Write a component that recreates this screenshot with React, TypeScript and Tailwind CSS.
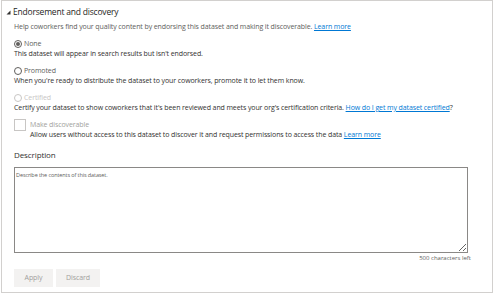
import { useState } from "react";

const font = { fontFamily: '"Segoe UI", "Open Sans", "Liberation Sans", sans-serif' };

function Radio({ checked, disabled }: { checked?: boolean; disabled?: boolean }) {
  return (
    <span
      className={`flex h-[8px] w-[8px] shrink-0 items-center justify-center rounded-full border ${
        disabled ? "border-[#c8c6c4]" : "border-[#605e5c]"
      }`}
    >
      {checked && <span className="h-[4px] w-[4px] rounded-full bg-[#605e5c]" />}
    </span>
  );
}

export default function App() {
  const [text, setText] = useState("");

  return (
    <div className="h-[294px] w-[494px] bg-white pl-[1px]" style={font}>
      <div className="flex h-[293px] w-[492px] flex-col border border-[#d2d0ce] text-[7px] tracking-[-0.1px] text-[#323130]">
        <div className="mt-[4px] flex h-[14px] items-center pl-[4px]">
          <svg width="5" height="5" viewBox="0 0 5 5" className="mr-[2px] mt-[1px]">
            <path d="M4.5 0.5 L4.5 4.5 L0.5 4.5 Z" fill="#323130" />
          </svg>
          <span className="text-[8.5px] leading-[14px] tracking-[-0.2px] text-[#252423]">
            Endorsement and discovery
          </span>
        </div>

        <div className="pl-[12px]">
          <p className="mt-[3px] leading-[10px] text-[#605e5c]">
            Help coworkers find your quality content by endorsing this dataset and making it discoverable.{" "}
            <a className="text-[#0078d4] underline">Learn more</a>
          </p>

          <div className="mt-[7px] flex h-[10px] items-center gap-[2px] text-[#605e5c]">
            <Radio checked />
            <span className="leading-[10px]">None</span>
          </div>
          <p className="leading-[10px]">This dataset will appear in search results but isn't endorsed.</p>

          <div className="mt-[7px] flex h-[10px] items-center gap-[2px] text-[#605e5c]">
            <Radio />
            <span className="leading-[10px]">Promoted</span>
          </div>
          <p className="leading-[10px]">
            When you're ready to distribute the dataset to your coworkers, promote it to let them know.
          </p>

          <div className="mt-[7px] flex h-[10px] items-center gap-[2px] text-[#c8c6c4]">
            <Radio disabled />
            <span className="leading-[10px]">Certified</span>
          </div>
          <p className="whitespace-nowrap leading-[10px]">
            Certify your dataset to show coworkers that it's been reviewed and meets your org's certification
            criteria. <a className="text-[#0078d4] underline">How do I get my dataset certified</a>?
          </p>

          <div className="mt-[6px] flex">
            <span className="h-[12px] w-[12px] shrink-0 border border-[#c8c6c4]" />
            <div className="ml-[4px] mt-[1px]">
              <p className="leading-[10px] text-[#a19f9d]">Make discoverable</p>
              <p className="whitespace-nowrap leading-[10px]">
                Allow users without access to this dataset to discover it and request permissions to access the
                data <a className="text-[#0078d4] underline">Learn more</a>
              </p>
            </div>
          </div>

          <p className="mt-[9px] text-[8px] leading-[12px] tracking-[-0.1px] text-[#323130]">Description</p>

          <textarea
            value={text}
            onChange={(e) => setText(e.target.value)}
            placeholder="Describe the contents of this dataset."
            className="mt-[6px] block h-[86px] w-[454px] resize-y border border-[#8a8886] px-[1px] pt-[3px] text-[5.5px] leading-[8px] text-[#323130] outline-none placeholder:text-[#605e5c]"
          />
          <p className="w-[457px] text-right text-[6px] leading-[10px] tracking-normal text-[#605e5c]">
            {500 - text.length} characters left
          </p>

          <div className="mt-[6px] flex gap-[3px]">
            <button className="h-[18px] w-[39px] bg-[#f3f2f1] text-[7px] text-[#a19f9d]" disabled>
              Apply
            </button>
            <button className="h-[18px] w-[44px] bg-[#f3f2f1] text-[7px] text-[#a19f9d]" disabled>
              Discard
            </button>
          </div>
        </div>
      </div>
    </div>
  );
}
